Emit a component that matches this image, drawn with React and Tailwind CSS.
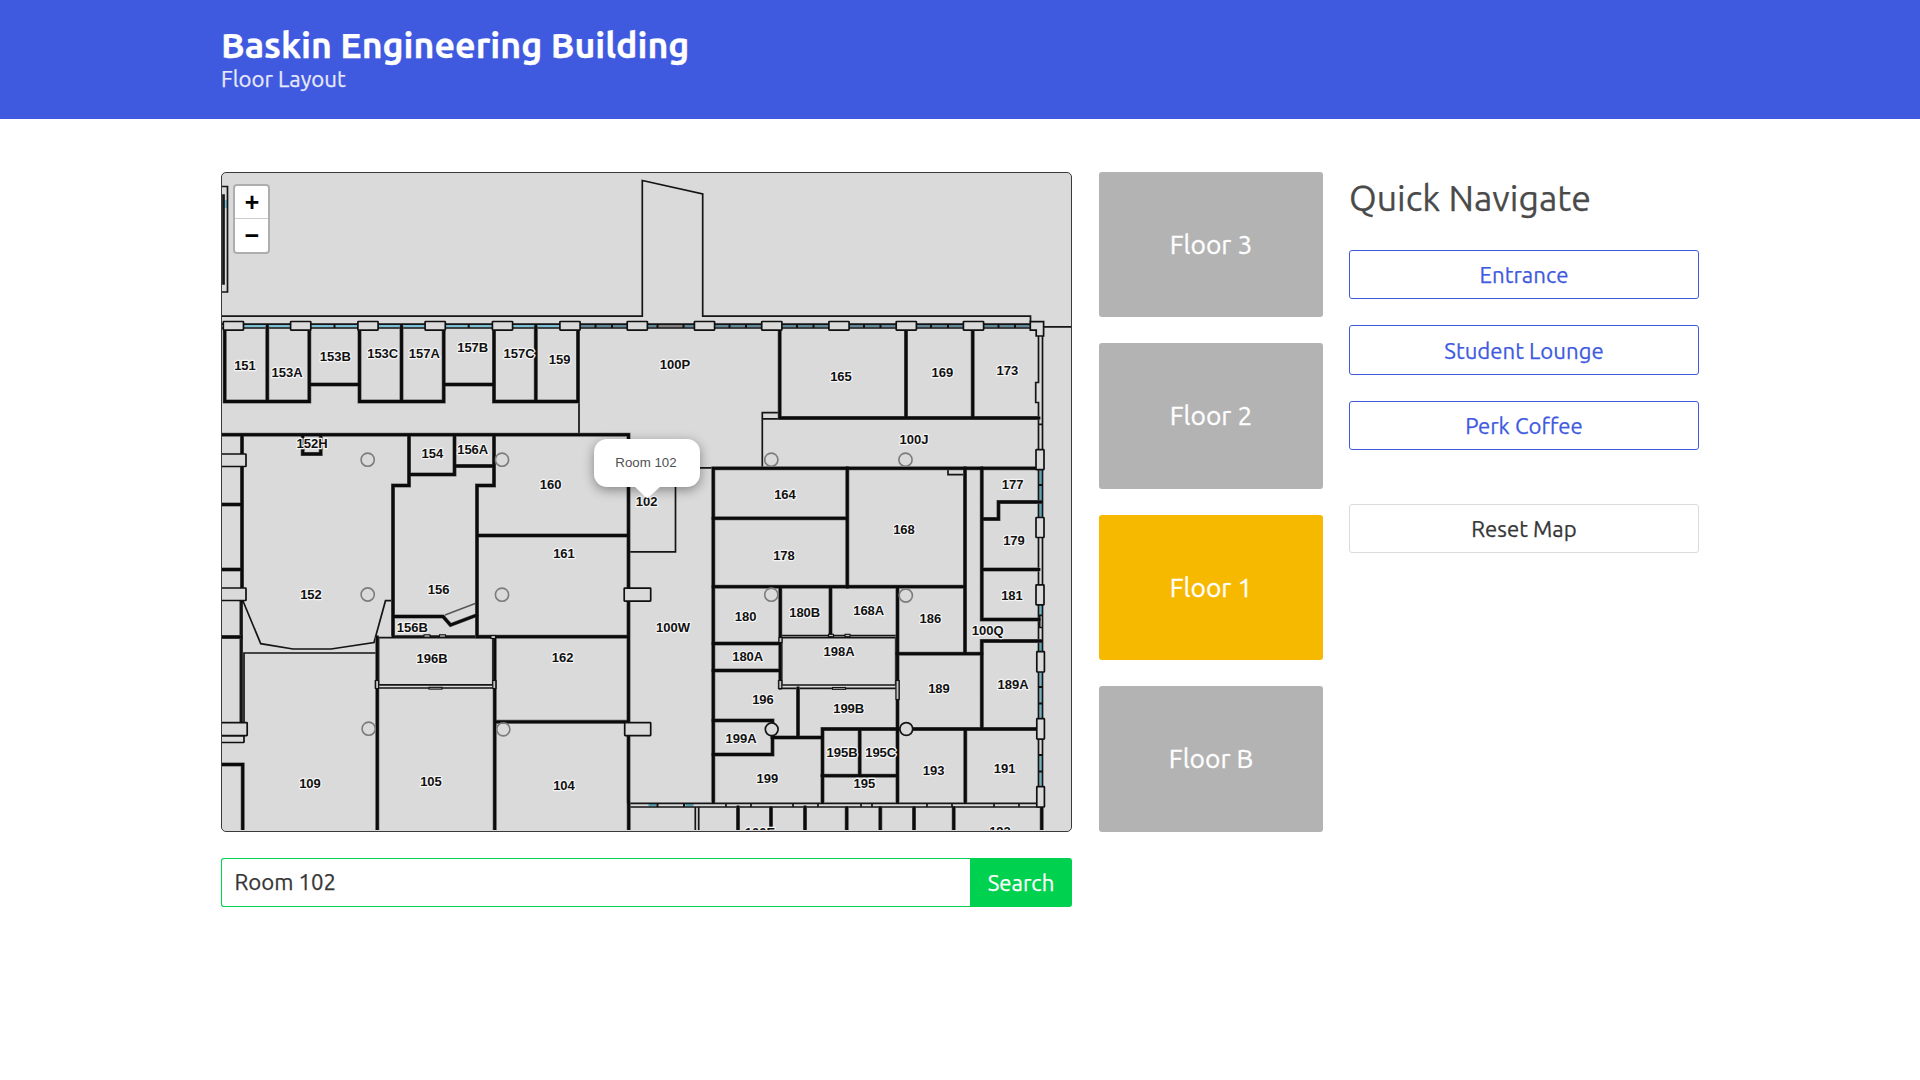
import React from "react";

const WALLS = [
  // north rooms
  "M224.7 330V401.5H309.3V330", "M267.3 326V401.5", "M309.3 384.5H359.5", "M359.5 330V401.5H443.7V330",
  "M401.5 326V401.5", "M443.7 384.5H494", "M494 330V401.5H578V330", "M535.8 326V401.5",
  "M779.7 330V418H1039", "M906 330V418", "M972.7 330V418",
  // west wing
  "M221 434.7H628.5V803", "M242 435V600", "M221 504.5H242", "M221 569.5H242", "M221 637H241",
  "M302.7 435V454H320.7V435", "M409 435V485.5H393V636", "M409 474.5H454.5V435", "M454.5 466H494",
  "M494 435V485.5H477V636.7H628", "M477 535.5H628", "M393 616.5H443L450.5 625L477 615",
  "M377.3 637V830", "M494.7 637V830", "M495 721.8H628", "M221 764.5H242.7V830", "M628.7 803V830",
  // east wing
  "M713.3 802V468.3H1039", "M713 518.3H847", "M847.3 468V587", "M713 586.7H965", "M965 468V653.7",
  "M981.8 468V619.5H1039", "M982 519H998.5V502H1041", "M982 569.5H1039", "M981.8 729V641H1041",
  "M897.5 587V802", "M897 653.7H982", "M830.5 587V636", "M780.3 587V688", "M713 643.5H780", "M713 670.5H780",
  "M713 720.5H772.5V754.5H713", "M772 737.5H822", "M798 688V737", "M822.5 802V729H1037",
  "M859.7 729V775.7", "M822 775.7H897", "M965.3 729V802",
  "M738 807V830", "M771 808V830", "M805 807V830", "M846.7 808V830", "M880.3 808V830", "M914 808V830",
  "M953.7 808V830", "M1041.7 808V830",
];

const LINES = [
  "M221 316.2H642.3V180.5L702.7 194V316.2H1030.5V322", "M1043.5 326.8H1072",
  "M221 324.2H1031M221 328H1031", "M579 400V434", "M762.3 467.5V412.7H780M762.3 418.8H780",
  "M629 467.8H713", "M675.5 480V551.8H629",
  "M243 601L260.7 643.7L293 649H331L374 642.5L385.5 600.7H393",
  "M377 653H244V722", "M393.5 636H477", "M240.4 600V722M242 600V722",
  "M1038.5 336V382.5H1035.7V402.5H1038.5V803.3H629M1042.5 336V807H629M1038.5 424.3H1042.5",
  "M948 469V474.6H965", "M378.5 637.7H492.8V684.8H378.5Z", "M375.5 680V688H496V680",
  "M781.7 637.7H895.7V685H781.7Z", "M778.7 680V688.4H898V680M780 635.5H897", "M899 680V700",
  "M1039.7 615.3H1042.5V627.5H1039.7Z",
  "M695.3 807V830M698.7 807V830", "M726 803V807M751 803V807M793 803V807M818 803V807M861 803V807M872 803V807M927 803V807M952 803V807M994 803V807M1019 803V807",
  "M221 186.5H227.5V292H221M223 195H224V284H223Z",
];

const WINDOWS = [
  [243, 324.8, 47, 2.6, "#79bfd6"], [310, 324.8, 48, 2.6, "#79bfd6"], [378, 324.8, 47, 2.6, "#79bfd6"],
  [445, 324.8, 47, 2.6, "#79bfd6"], [512, 324.8, 47, 2.6, "#79bfd6"], [580, 324.8, 47, 2.6, "#5f8798"],
  [647, 324.8, 47, 2.6, "#5f8798"], [658, 324.8, 25, 2.6, "#857e80"], [714, 324.8, 47, 2.6, "#5f8798"],
  [782, 324.8, 47, 2.6, "#5f8798"], [849, 324.8, 47, 2.6, "#5f8798"], [916, 324.8, 47, 2.6, "#5f8798"],
  [983, 324.8, 47, 2.6, "#5f8798"],
  [1039.2, 470, 2.6, 47, "#56a5ba"], [1039.2, 605, 2.6, 10, "#6bb9cf"], [1039.2, 642, 2.6, 9, "#56a5ba"],
  [1039.2, 672, 2.6, 46, "#6fb0c2"], [1039.2, 755, 2.6, 31, "#6fb0c2"],
  [648.5, 804, 8, 2.4, "#56a5ba"], [685.5, 804, 8, 2.4, "#56a5ba"], [223.5, 200, 3.5, 8, "#79bfd6"],
];

const MULLIONS = [
  "M334.5 324V328M468.7 324V328",
  "M595.5 324V328M612 324V328M657.5 324V328M683.5 324V328M729.5 324V328M746 324V328M797 324V328M813.5 324V328M864 324V328M880.5 324V328M931 324V328M948 324V328M998.5 324V328M1015 324V328",
  "M1038.5 485H1042.5M1038.5 687H1042.5M1038.5 703.5H1042.5M1038.5 755H1042.5M1038.5 771.5H1042.5",
  "M657.5 803V807M684 803V807",
];

const PIERS = [
  [223.3, 321.5, 20.2, 8.6], [290.6, 321.5, 20.2, 8.6], [357.9, 321.5, 20.2, 8.6], [425.1, 321.5, 20.2, 8.6],
  [492.4, 321.5, 20.2, 8.6], [559.9, 321.5, 20.2, 8.6], [627.2, 321.5, 20.2, 8.6], [694.4, 321.5, 20.2, 8.6],
  [761.7, 321.5, 20.2, 8.6], [828.9, 321.5, 20.2, 8.6], [896.2, 321.5, 20.2, 8.6], [963.4, 321.5, 20.2, 8.6],
  [215, 454, 31, 12.5], [215, 588, 31, 12.5], [215, 735.7, 29, 6.8], [215, 722.7, 32.2, 13],
  [624.2, 588.2, 26.5, 13], [624.7, 722.7, 26, 13],
  [1036, 449.7, 8, 20], [1036, 517.5, 8, 20], [1036, 584.8, 8, 20], [1036.8, 651.7, 7.6, 20.3],
  [1036.8, 718.7, 7.6, 20.5], [1036.8, 786.7, 7.6, 20.3],
];

// door frames set into the thick walls
const FRAMES = [
  [424, 634.8, 6, 2.4], [439.5, 634.8, 6, 2.4], [828.5, 634.3, 5, 2.4], [845, 634.3, 5, 2.4],
  [429, 687.3, 13, 1.8], [832.5, 687.5, 13, 1.8], [375.6, 680.5, 3, 8], [492.8, 680.5, 3, 8],
  [778.8, 680.5, 3, 8], [896, 680.5, 3, 19], [491, 635.5, 4.5, 3], [779, 637.5, 3, 5],
];

const COLUMNS = [
  [367.7, 459.7], [502, 459.7], [771.3, 459.7], [905.5, 459.7], [367.7, 594.5], [502, 594.7],
  [771.3, 594.7], [905.8, 595.5], [368.7, 728.7], [503.3, 729.3],
];

const ROOMS = [
  ["151", 245, 366], ["153A", 287, 372.7], ["153B", 335.3, 357], ["153C", 382.7, 354], ["157A", 424.3, 354],
  ["157B", 472.7, 347.5], ["157C", 519, 354], ["159", 559.7, 359.7], ["100P", 675, 365], ["165", 841, 377],
  ["169", 942.3, 372.7], ["173", 1007.3, 370.7], ["100J", 914, 440], ["152H", 312, 444], ["154", 432.3, 454],
  ["156A", 472.7, 450], ["152", 311, 595], ["156", 438.7, 589.7], ["156B", 412.3, 628], ["160", 550.7, 485],
  ["161", 564, 554], ["100W", 673, 628], ["102", 646.7, 501.7], ["164", 785, 495], ["178", 784, 555.5],
  ["180", 745.7, 617], ["180A", 747.7, 656.7], ["196", 763, 699.7], ["199A", 741, 739], ["199", 767.3, 778.7],
  ["162", 562.7, 657.7], ["104", 564, 785.3], ["196B", 432, 658.8], ["109", 310, 783.3], ["105", 431, 782],
  ["177", 1012.7, 485], ["179", 1014, 541], ["181", 1012, 596], ["168", 904, 530], ["180B", 804.7, 612.7],
  ["168A", 868.7, 610.7], ["186", 930.3, 618.3], ["100Q", 987.7, 630.3], ["198A", 839, 651.3], ["189", 939, 688.7],
  ["189A", 1013, 684.3], ["199B", 848.7, 708.5], ["195B", 842, 752.3], ["195C", 880.7, 752.3], ["195", 864.3, 784],
  ["193", 933.7, 771], ["191", 1004.7, 768.7], ["100E", 760, 832.7], ["192", 1000, 831.5],
];

function FloorPlan() {
  return (
    <svg viewBox="222 173 849 658" className="block h-[658px] w-[849px]" fill="none">
      <clipPath id="plan"><path d="M221 172H1072V830H221Z" /></clipPath>
      <g clipPath="url(#plan)">
        {WINDOWS.map(([x, y, w, h, c], i) => <rect key={i} x={x} y={y} width={w} height={h} fill={c} />)}
        <path d={LINES.join("")} stroke="#151515" strokeWidth="1.7" />
        <path d={MULLIONS.join("")} stroke="#111" strokeWidth="2" />
        <path d="M445 615L476.5 603" stroke="#555" strokeWidth="1.4" />
        <path d={WALLS.join("")} stroke="#5c5c5c" strokeWidth="4" />
        <path d={WALLS.join("")} stroke="#0b0b0b" strokeWidth="2.8" strokeLinecap="square" />
        {FRAMES.map(([x, y, w, h], i) => (
          <rect key={i} x={x} y={y} width={w} height={h} fill="#c4c4c4" stroke="#101010" strokeWidth="1.1" />
        ))}
        {PIERS.map(([x, y, w, h], i) => (
          <rect key={i} x={x} y={y} width={w} height={h} rx=".6" fill="#dadada" stroke="#101010" strokeWidth="1.7" />
        ))}
        <path d="M1030.3 321.7H1043.6V336H1036.2V330.2H1030.3Z" fill="#dadada" stroke="#101010" strokeWidth="1.7" />
        {COLUMNS.map(([x, y], i) => <circle key={i} cx={x} cy={y} r="6.6" stroke="#7c7c7c" strokeWidth="1.6" />)}
        <circle cx="771.7" cy="729.3" r="6.4" fill="#dadada" stroke="#151515" strokeWidth="1.7" />
        <circle cx="906.3" cy="729" r="6.4" fill="#dadada" stroke="#151515" strokeWidth="1.7" />
        <g
          fontFamily='"Liberation Sans", Arial, sans-serif' fontSize="13" fontWeight="700" fill="#111"
          stroke="#f4f4f4" strokeWidth="2.4" strokeLinejoin="round" paintOrder="stroke" textAnchor="middle"
        >
          {ROOMS.map(([name, x, y]) => <text key={name} x={x} y={y + 4.3}>{name}</text>)}
        </g>
      </g>
    </svg>
  );
}

function ZoomControl() {
  const cell = "flex w-[33px] items-center justify-center pl-px pt-[4px] font-['Liberation_Mono',monospace] text-[25px] font-bold leading-none text-black";
  return (
    <div className="absolute left-[11px] top-[11px] flex flex-col rounded-[4px] border-2 border-[#aeaeae] bg-white">
      <button className={`${cell} h-8`}>+</button>
      <div className="h-px bg-[#ccc]" />
      <button className={`${cell} h-[33px]`}>−</button>
    </div>
  );
}

function Popup() {
  return (
    <div className="absolute left-[372px] top-[266px] flex h-[48px] w-[106px] items-center justify-center rounded-[13px] bg-white pr-[2px] font-['Liberation_Sans',Arial,sans-serif] text-[13.3px] text-[#505050] shadow-[0_3px_12px_rgba(0,0,0,0.4)]">
      Room 102
      <svg className="absolute left-[40px] top-[47px]" width="27" height="13" viewBox="0 0 27 13">
        <path d="M0 0H27L14.5 11.5Q13.3 12.4 12 11.5Z" fill="#fff" />
      </svg>
    </div>
  );
}

function Floor({ name, active }) {
  return (
    <button className={`flex items-center justify-center rounded-[3px] pb-[2px] text-[26.4px] text-white [-webkit-text-stroke:0.3px] ${active ? "bg-[#f7b900]" : "bg-[#b3b3b3]"}`}>
      {name}
    </button>
  );
}

function NavButton({ children }) {
  return (
    <button className="flex h-[49.5px] w-full items-center justify-center rounded-[3px] border border-[#405adf] bg-white pt-[2px] text-[#405adf]">
      {children}
    </button>
  );
}

export default function App() {
  return (
    <div className="min-h-screen bg-white font-['Ubuntu','Noto_Sans',sans-serif] text-[22.2px] leading-[32px] text-[#363636] [-webkit-text-stroke:0.25px]">
      <header className="h-[119px] bg-[#405adf] pl-[221px] pt-[24px] text-white">
        <h1 className="text-[35.75px] font-bold leading-[42px]"><span>Baskin Engineering Building</span></h1>
        <p className="pt-px leading-[24px] text-[#e6e9fb]"><span>Floor Layout</span></p>
      </header>
      <main className="flex pl-[221px] pt-[53px]">
        <section className="w-[851px]">
          <div className="relative h-[660px] overflow-hidden rounded-[5px] border border-[#3a3a3a] bg-[#dadada] [-webkit-text-stroke:0]">
            <FloorPlan />
            <ZoomControl />
            <Popup />
          </div>
          <form className="mt-[26px] flex h-[49px]">
            <input
              className="min-w-0 flex-1 rounded-l-[3px] border border-r-0 border-[#00d14e] bg-white px-[12.5px] pb-[2px] outline-none"
              defaultValue="Room 102"
            />
            <button type="button" className="w-[102px] rounded-r-[3px] bg-[#00d14e] text-white">Search</button>
          </form>
        </section>
        <section className="ml-[27px] grid h-[660px] w-[224px] grid-rows-[145px_146px_145px_146px] gap-[26px]">
          <Floor name="Floor 3" />
          <Floor name="Floor 2" />
          <Floor name="Floor 1" active />
          <Floor name="Floor B" />
        </section>
        <aside className="ml-[26px] w-[350px]">
          <h2 className="mb-[27.6px] pt-[2px] text-[35.7px] leading-[48px] text-[#4a4a4a]"><span>Quick Navigate</span></h2>
          <div className="flex flex-col gap-[26px]">
            <NavButton>Entrance</NavButton>
            <NavButton>Student Lounge</NavButton>
            <NavButton>Perk Coffee</NavButton>
          </div>
          <button className="mt-[53.6px] flex h-[49px] w-full items-center justify-center rounded-[3px] border border-[#dbdbdb] pt-[2px] text-[#363636]">
            Reset Map
          </button>
        </aside>
      </main>
    </div>
  );
}
